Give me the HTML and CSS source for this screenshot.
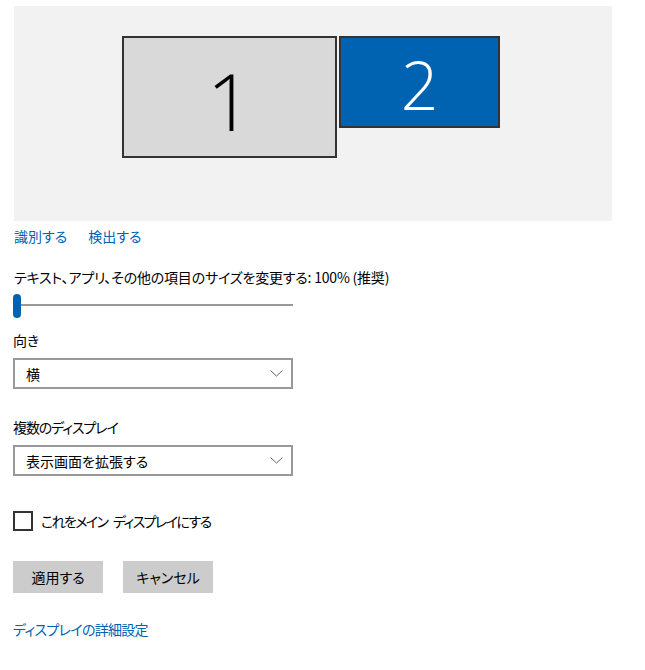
FILE: index.html
```html
<!DOCTYPE html>
<html lang="ja">
<head>
<meta charset="utf-8">
<link rel="stylesheet" href="styles.css">
</head>
<body>
<div class="page">
  <div class="arrange">
    <div class="monitor primary"><span class="num num1">1</span></div>
    <div class="monitor secondary"><span class="num num2">2</span></div>
  </div>
  <div class="links">
    <a class="link">識別する</a>
    <a class="link">検出する</a>
  </div>
  <div class="label scale-label">テキスト、アプリ、その他の項目のサイズを変更する: 100% (推奨)</div>
  <div class="slider">
    <div class="track"></div>
    <div class="thumb"></div>
  </div>
  <div class="label orient-label">向き</div>
  <div class="select">
    <span>横</span>
    <svg class="chev" width="13" height="7" viewBox="0 0 13 7"><path d="M0.5 0.5 L6.5 6 L12.5 0.5" fill="none" stroke="#666" stroke-width="1"/></svg>
  </div>
  <div class="label label-gap kana">複数のディスプレイ</div>
  <div class="select">
    <span>表示画面を拡張する</span>
    <svg class="chev" width="13" height="7" viewBox="0 0 13 7"><path d="M0.5 0.5 L6.5 6 L12.5 0.5" fill="none" stroke="#666" stroke-width="1"/></svg>
  </div>
  <div class="check-row">
    <div class="box"></div>
    <span class="check-text">これをメイン ディスプレイにする</span>
  </div>
  <div class="buttons">
    <div class="btn">適用する</div>
    <div class="btn">キャンセル</div>
  </div>
  <a class="link adv">ディスプレイの詳細設定</a>
</div>
</body>
</html>
```
FILE: styles.css
```css
html, body {
  margin: 0;
  padding: 0;
  background: #fff;
}
body {
  font-family: "Noto Sans CJK JP", "Noto Sans", sans-serif;
  font-size: 14px;
  color: #000;
  font-feature-settings: "palt";
}
.page {
  padding: 6px 0 0 13px;
}
.arrange {
  margin-left: 1px;
  width: 598px;
  height: 215px;
  background: #f2f2f2;
  display: flex;
  justify-content: flex-start;
  align-items: flex-start;
  gap: 2px;
  padding: 30px 0 0 108px;
  box-sizing: border-box;
}
.monitor {
  box-sizing: border-box;
  border: 2px solid #333;
  display: flex;
  justify-content: center;
  align-items: center;
}
.primary {
  width: 215px;
  height: 122px;
  background: #d9d9d9;
}
.secondary {
  width: 161px;
  height: 92px;
  background: #0063b1;
}
.num {
  font-family: "Open Sans", sans-serif;
  font-weight: 300;
  line-height: 1;
}
.num1 {
  font-size: 80px;
  color: #000;
  margin-top: 6px;
}
.num2 {
  font-size: 66px;
  color: #fff;
  margin-top: 4px;
}
.link {
  color: #0063b1;
  font-size: 14px;
}
.links {
  display: flex;
  gap: 21px;
  margin-top: 5px;
  margin-left: 1px;
  line-height: 20px;
}
.label {
  line-height: 20px;
}
.scale-label {
  margin-top: 21px;
  margin-left: 1px;
  letter-spacing: -0.2px;
}
.slider {
  position: relative;
  width: 280px;
  height: 24px;
  margin-top: 7px;
}
.track {
  position: absolute;
  left: 1px;
  right: 0;
  top: 10px;
  height: 2px;
  background: #999;
}
.thumb {
  position: absolute;
  left: 0;
  top: 0;
  width: 8px;
  height: 24px;
  border-radius: 4px;
  background: #0063b1;
}
.orient-label {
  margin-top: 12px;
}
.select {
  box-sizing: border-box;
  width: 280px;
  height: 31px;
  border: 2px solid #999;
  margin-top: 8px;
  display: flex;
  align-items: center;
  justify-content: space-between;
  padding: 0 8px 0 11px;
}
.chev {
  display: block;
}
.label-gap {
  margin-top: 28px;
}
.kana {
  letter-spacing: -1.1px;
}
.check-row {
  display: flex;
  align-items: center;
  gap: 8px;
  margin-top: 35px;
}
.check-text {
  letter-spacing: -1.6px;
  word-spacing: 4px;
}
.box {
  box-sizing: border-box;
  width: 20px;
  height: 20px;
  border: 2px solid #333;
}
.buttons {
  display: flex;
  gap: 20px;
  margin-top: 30px;
}
.btn {
  width: 90px;
  height: 32px;
  background: #ccc;
  display: flex;
  align-items: center;
  justify-content: center;
}
.adv {
  display: block;
  margin-top: 26px;
  line-height: 20px;
  letter-spacing: -0.7px;
}
```
